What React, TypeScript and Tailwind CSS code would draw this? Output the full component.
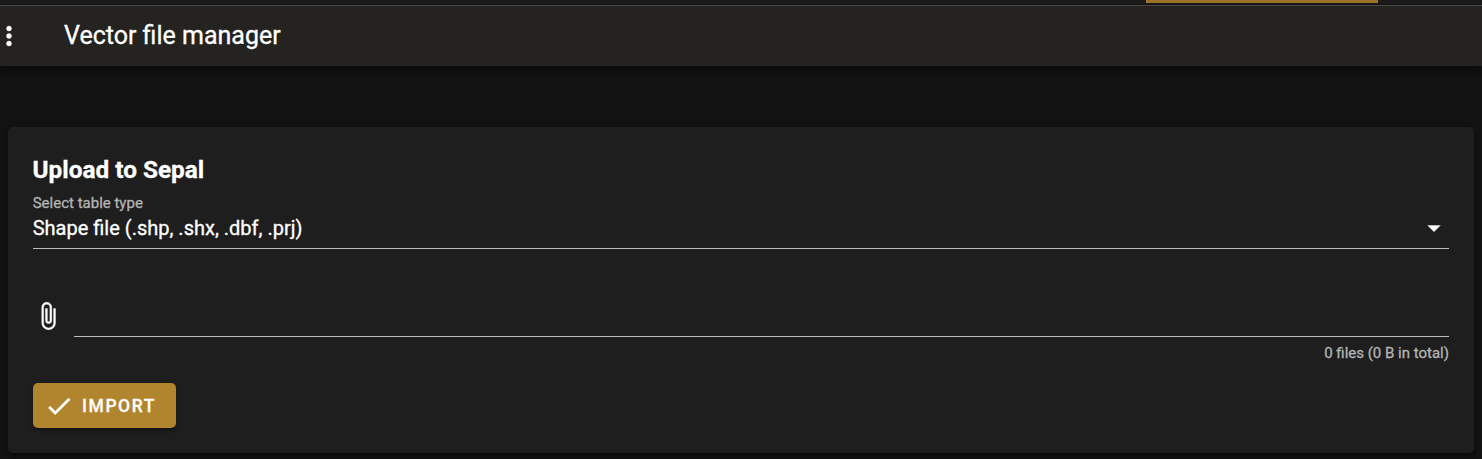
const icons = {
  dots: "M12,16A2,2 0 0,1 14,18A2,2 0 0,1 12,20A2,2 0 0,1 10,18A2,2 0 0,1 12,16M12,10A2,2 0 0,1 14,12A2,2 0 0,1 12,14A2,2 0 0,1 10,12A2,2 0 0,1 12,10M12,4A2,2 0 0,1 14,6A2,2 0 0,1 12,8A2,2 0 0,1 10,6A2,2 0 0,1 12,4Z",
  caret: "M7,10L12,15L17,10H7Z",
  clip: "M16.5,6V17.5A4,4 0 0,1 12.5,21.5A4,4 0 0,1 8.5,17.5V5A2.5,2.5 0 0,1 11,2.5A2.5,2.5 0 0,1 13.5,5V15.5A1,1 0 0,1 12.5,16.5A1,1 0 0,1 11.5,15.5V6H10V15.5A2.5,2.5 0 0,0 12.5,18A2.5,2.5 0 0,0 15,15.5V5A4,4 0 0,0 11,1A4,4 0 0,0 7,5V17.5A5.5,5.5 0 0,0 12.5,23A5.5,5.5 0 0,0 18,17.5V6H16.5Z",
  check: "M21,7L9,19L3.5,13.5L4.91,12.09L9,16.17L19.59,5.59L21,7Z",
};

function Icon({ path, className = "" }: { path: string; className?: string }) {
  return (
    <svg viewBox="0 0 24 24" fill="currentColor" stroke="currentColor" strokeWidth="0.3" className={`size-[30px] shrink-0 ${className}`}>
      <path d={path} />
    </svg>
  );
}

export default function App() {
  return (
    <div className="flex h-[459px] w-full flex-col overflow-hidden bg-[#121212] font-['Roboto',sans-serif] text-white [-webkit-text-stroke:0.3px_currentColor]">
      <div className="flex h-[5px] shrink-0 bg-[#1a1a1a] pl-[1146px]">
        <div className="h-[3px] w-[232px] bg-[#a1782c]" />
      </div>
      <header className="flex h-[61px] shrink-0 items-center border-t border-[#484847] bg-[#24231f] shadow-[0_3px_5px_-1px_rgba(0,0,0,0.2),0_5px_6px_rgba(0,0,0,0.14),0_1px_12px_rgba(0,0,0,0.12)]">
        <Icon path={icons.dots} className="-ml-[6px]" />
        <h1 className="ml-10 text-[25px] leading-[30px]">Vector file manager</h1>
      </header>
      <main className="mx-2 mt-[61px] flex h-[326px] shrink-0 flex-col rounded-[5px] bg-[#1e1e1e] px-[25px] pt-[27px] shadow-[0_4px_5px_-2px_rgba(0,0,0,0.2),0_3px_3px_rgba(0,0,0,0.14),0_1px_6px_rgba(0,0,0,0.12)]">
        <h2 className="-ml-[0.5px] text-[24.35px] leading-8 font-bold">Upload to Sepal</h2>
        <div className="mt-[7px] -ml-[0.3px] text-[15px] leading-5 text-[#b4b4b4]">Select table type</div>
        <div className="flex h-[36px] items-start justify-between border-b border-[#bcbcbc]">
          <span className="mt-[3px] -ml-[0.3px] text-[20px] leading-[25px]">Shape file (.shp, .shx, .dbf, .prj)</span>
          <Icon path={icons.caret} />
        </div>
        <div className="mt-[51px] flex h-[37px] items-stretch gap-[11px]">
          <Icon path={icons.clip} className="mt-px" />
          <div className="grow border-b border-[#bcbcbc]" />
        </div>
        <div className="mt-[6px] text-right text-[15px] leading-5 text-[#b4b4b4]">0 files (0 B in total)</div>
        <button className="mt-[20px] flex h-[45px] w-[143px] items-center rounded-[5px] bg-[#b1842e] pl-[11px] text-[17.5px] font-medium tracking-[0.0893em] shadow-[0_4px_1px_-2px_rgba(0,0,0,0.2),0_2px_3px_rgba(0,0,0,0.14),0_1px_6px_rgba(0,0,0,0.12)]">
          <Icon path={icons.check} />
          <span className="ml-2 pt-[2px]">IMPORT</span>
        </button>
      </main>
    </div>
  );
}
